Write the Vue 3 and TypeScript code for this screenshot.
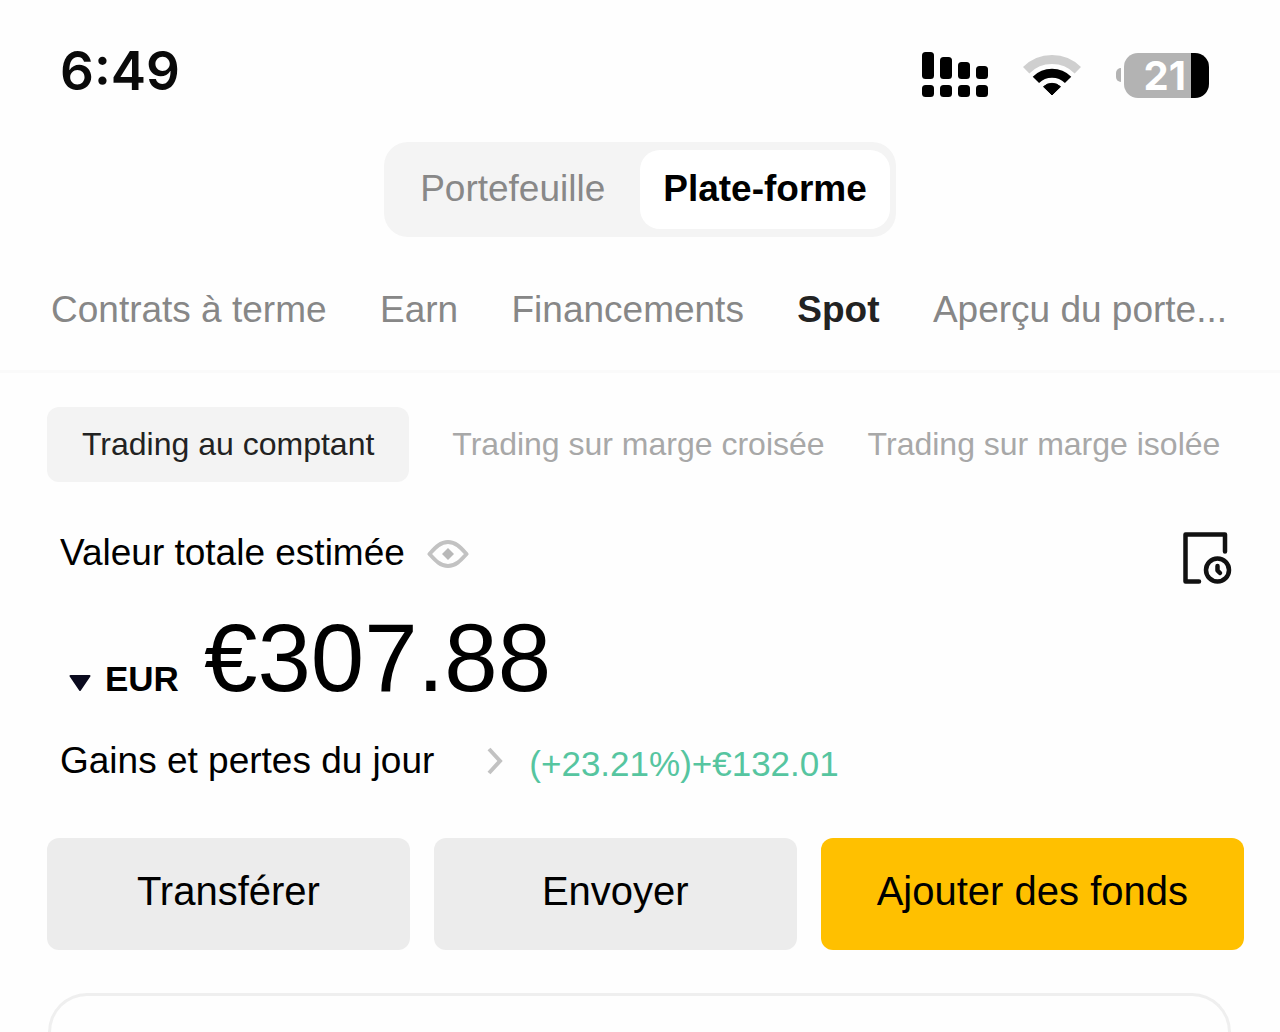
<script setup lang="ts">
import { ref } from 'vue'

interface Bar {
  x: number
  top: number
}

const signalBars: Bar[] = [
  { x: 0, top: 0 },
  { x: 18, top: 5 },
  { x: 36, top: 10 },
  { x: 54, top: 14 },
]

const modes: string[] = ['Portefeuille', 'Plate-forme']
const activeMode = ref<string>('Plate-forme')

const tabs: string[] = ['Contrats à terme', 'Earn', 'Financements', 'Spot', 'Aperçu du porte...']
const activeTab = ref<string>('Spot')

const markets: string[] = ['Trading au comptant', 'Trading sur marge croisée', 'Trading sur marge isolée']
const activeMarket = ref<string>('Trading au comptant')

const currency = ref<string>('EUR')
</script>

<template>
  <div class="page">
    <header class="status">
      <time class="clock">6:49</time>
      <div class="indicators">
        <svg class="signal" width="66" height="46" viewBox="0 0 66 46" aria-hidden="true">
          <template v-for="bar in signalBars" :key="bar.x">
            <rect :x="bar.x" :y="bar.top" width="12" :height="27 - bar.top" rx="3.5" />
            <rect :x="bar.x" y="33" width="12" height="12" rx="3.5" />
          </template>
        </svg>
        <svg class="wifi" width="58" height="44" viewBox="0 0 58 44" aria-hidden="true">
          <path d="M3.2 17.2A36.5 36.5 0 0 1 54.8 17.2" fill="none" stroke="#cfcfcf" stroke-width="9" />
          <path d="M12.9 26.9A22.8 22.8 0 0 1 45.1 26.9" fill="none" stroke="#000" stroke-width="9" />
          <path d="M29 42L20.5 33.7A12.4 12.4 0 0 1 37.5 33.7Z" stroke="#000" stroke-width="1" stroke-linejoin="round" />
        </svg>
        <div class="battery">
          <span class="nub"></span>
          <span class="level">21</span>
          <span class="charge"></span>
        </div>
      </div>
    </header>

    <div class="toggle">
      <button
        v-for="mode in modes"
        :key="mode"
        type="button"
        class="mode"
        :class="{ active: mode === activeMode }"
        @click="activeMode = mode"
      >{{ mode }}</button>
    </div>

    <nav class="tabs">
      <a
        v-for="tab in tabs"
        :key="tab"
        href="#"
        class="tab"
        :class="{ active: tab === activeTab }"
        @click.prevent="activeTab = tab"
      >{{ tab }}</a>
    </nav>

    <main class="content">
      <div class="markets">
        <button
          v-for="market in markets"
          :key="market"
          type="button"
          class="market"
          :class="{ active: market === activeMarket }"
          @click="activeMarket = market"
        >{{ market }}</button>
      </div>

      <section class="summary">
        <div class="heading">
          <span class="label">Valeur totale estimée</span>
          <button type="button" class="icon eye" aria-label="Masquer le solde">
            <svg width="42" height="30" viewBox="0 0 42 30">
              <path d="M2.500 15C8 9 13 3 21 3S34 9 39.500 15C34 21 29 27 21 27S8 21 2.500 15Z" fill="none" stroke="#c2c2c2" stroke-width="4" stroke-linejoin="round" />
              <path d="M21 9L27 15L21 21L15 15Z" fill="#b8b8b8" />
            </svg>
          </button>
          <button type="button" class="icon history" aria-label="Historique">
            <svg width="50" height="54" viewBox="0 0 50 54" fill="none" stroke="#111" stroke-width="4.5" stroke-linecap="round" stroke-linejoin="round">
              <path d="M17 50.500H3.500V3.500H43V20.500" />
              <circle cx="35.500" cy="39" r="11.500" />
              <path d="M35.500 35V39.500L38 42" />
            </svg>
          </button>
        </div>

        <div class="balance">
          <label class="currency">
            <svg width="22" height="16" viewBox="0 0 22 16" aria-hidden="true">
              <path d="M1.500 1H20.500L11 15Z" fill="#0a0a1e" stroke="#0a0a1e" stroke-width="2" stroke-linejoin="round" />
            </svg>
            <select v-model="currency" aria-label="Devise">
              <option>EUR</option>
            </select>
          </label>
          <span class="amount">€307.88</span>
        </div>

        <div class="profit">
          <span class="label">Gains et pertes du jour</span>
          <svg class="chevron" width="16" height="28" viewBox="0 0 16 28" aria-hidden="true">
            <path d="M2 2L13 14L2 26" fill="none" stroke="#c2c2c2" stroke-width="4" />
          </svg>
          <span class="gain">(+23.21%)+€132.01</span>
        </div>
      </section>

      <div class="actions">
        <button type="button" class="action">Transférer</button>
        <button type="button" class="action">Envoyer</button>
        <button type="button" class="action primary">Ajouter des fonds</button>
      </div>

      <section class="card"></section>
    </main>
  </div>
</template>

<style>
body {
  margin: 0;
  background: #fefefe;
}
</style>

<style scoped>
.page {
  font-family: "Liberation Sans", Arial, sans-serif;
  font-size: 37px;
  line-height: 44px;
  color: #000;
}

button,
select {
  margin: 0;
  padding: 0;
  border: 0;
  background: none;
  font: inherit;
  color: inherit;
  cursor: pointer;
}

svg {
  display: block;
}

.status {
  display: flex;
  justify-content: space-between;
  align-items: flex-start;
  padding: 41px 71px 41px 60px;
}

.clock {
  font-family: Inter, "Liberation Sans", sans-serif;
  font-size: 53px;
  line-height: 60px;
  font-weight: 600;
  color: #0a0a0a;
}

.indicators {
  display: flex;
  align-items: center;
  gap: 35px;
  padding-top: 11px;
}

.battery {
  display: flex;
  align-items: center;
}

.nub {
  width: 5px;
  height: 14px;
  margin-right: 3px;
  border-radius: 5px 0 0 5px;
  background: #b3b3b3;
}

.level {
  padding: 0 5px 0 20px;
  border-radius: 14px 0 0 14px;
  background: #b3b3b3;
  color: #fff;
  font-family: Inter, "Liberation Sans", sans-serif;
  font-size: 40px;
  line-height: 45px;
  font-weight: 700;
}

.charge {
  width: 18px;
  height: 45px;
  border-radius: 0 14px 14px 0;
  background: #000;
}

.toggle {
  display: flex;
  gap: 12px;
  width: max-content;
  margin: 0 auto;
  padding: 8px 6px 8px 13px;
  border-radius: 24px;
  background: #f4f4f4;
}

.mode {
  padding: 17px 23px 18px;
  border-radius: 20px;
  color: #888;
}

.mode.active {
  background: #fff;
  font-weight: 700;
  color: #000;
}

.tabs {
  display: flex;
  justify-content: space-between;
  padding: 51px 53px 38px 51px;
  border-bottom: 3px solid #fafafa;
  white-space: nowrap;
}

.tab {
  color: #878787;
  text-decoration: none;
}

.tab.active {
  font-weight: 700;
  color: #222;
}

.content {
  padding: 34px 36px 0 47px;
}

.markets {
  display: flex;
  gap: 43px;
  font-size: 32px;
  white-space: nowrap;
}

.market {
  padding: 15px 0 16px;
  color: #a8a8a8;
}

.market.active {
  padding: 15px 35px 16px;
  border-radius: 12px;
  background: #f3f3f3;
  color: #222;
}

.summary {
  padding: 49px 12px 49px 13px;
}

.heading {
  display: flex;
  align-items: flex-start;
  gap: 22px;
}

.eye {
  padding-top: 8px;
}

.history {
  margin-left: auto;
}

.balance {
  display: flex;
  align-items: baseline;
  gap: 25px;
  padding: 23px 0 31px 9px;
}

.currency {
  display: flex;
  align-items: baseline;
  gap: 14px;
  font-size: 35px;
  font-weight: 700;
}

.currency svg {
  margin-bottom: 2px;
}

.currency select {
  appearance: none;
}

.amount {
  font-size: 96px;
  line-height: 100px;
}

.profit {
  display: flex;
  align-items: flex-start;
}

.chevron {
  margin: 8px 26px 0 53px;
}

.gain {
  font-size: 35px;
  line-height: 50px;
  color: #56c5a0;
}

.actions {
  display: grid;
  grid-template-columns: 6fr 6fr 7fr;
  gap: 24px;
}

.action {
  padding: 31px 0 37px;
  border-radius: 12px;
  background: #ececec;
  font-size: 40px;
}

.action.primary {
  background: #ffc000;
}

.card {
  height: 36px;
  margin: 43px 13px 0 1px;
  border: 3px solid #efefef;
  border-bottom: 0;
  border-radius: 40px 40px 0 0;
}
</style>
